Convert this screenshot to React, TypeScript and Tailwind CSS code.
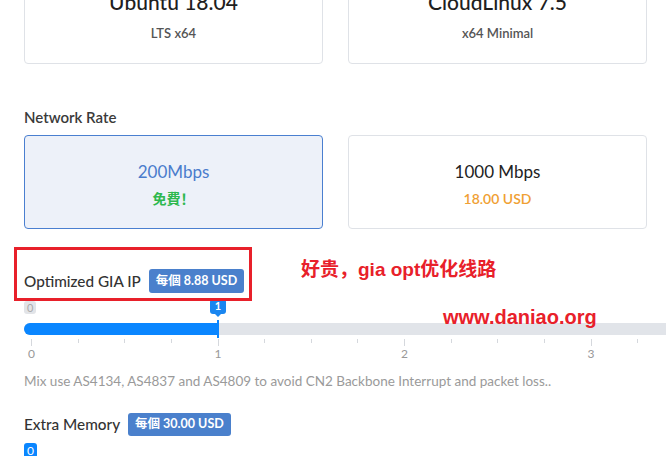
import React from "react"

const font = { fontFamily: '"Lato", "Noto Sans CJK SC", sans-serif' }

function OptionCard({ title, sub, selected, titleClass, subClass, className }: { title: string, sub: string, selected?: boolean, titleClass: string, subClass: string, className?: string }) {
	return (
		<div className={`flex flex-col items-center justify-center rounded-[4px] border ${selected ? "border-[#4a7fd0] bg-[#edf1f9]" : "border-[#dfe2e7] bg-white"} ${className ?? ""}`}>
			<div className={titleClass}>{title}</div>
			<div className={subClass}>{sub}</div>
		</div>
	)
}

function Badge({ children, className }: { children: React.ReactNode, className?: string }) {
	return (
		<span className={`inline-flex items-center rounded-[3px] bg-[#4a80cc] px-[7px] text-[12.5px] font-bold text-white ${className ?? ""}`}>
			{children}
		</span>
	)
}

export default function App() {
	const unit = 186.5
	const ticks = Array.from({ length: 16 }, (_, i) => i)
	return (
		<div className="relative h-[456px] w-[666px] overflow-hidden bg-white" style={font}>
			<div className="-mt-[36px] pl-[24px]">
				{/* OS cards */}
				<div className="grid grid-cols-[299px_299px] gap-[25px]">
					<OptionCard
						title="Ubuntu 18.04"
						sub="LTS x64"
						className="h-[100px] pt-[4px]"
						titleClass="text-[21px] font-medium leading-[28px] text-[#1f1f1f]"
						subClass="mt-[8px] text-[13px] font-semibold text-[#555]"
					/>
					<OptionCard
						title="CloudLinux 7.5"
						sub="x64 Minimal"
						className="h-[100px] pt-[4px]"
						titleClass="text-[21px] font-medium leading-[28px] text-[#1f1f1f]"
						subClass="mt-[8px] text-[13px] font-semibold text-[#555]"
					/>
				</div>

				{/* Network rate */}
				<div className="mt-[43px] text-[15px] font-semibold leading-[20px] text-[#3a3a3a]">Network Rate</div>
				<div className="mt-[8px] grid grid-cols-[299px_299px] gap-[25px]">
					<OptionCard
						selected
						title="200Mbps"
						sub="免費！"
						className="h-[94px] pt-[4px]"
						titleClass="text-[17px] leading-[24px] text-[#4a7ccc]"
						subClass="mt-[4px] text-[14px] font-bold text-[#2eb84f]"
					/>
					<OptionCard
						title="1000 Mbps"
						sub="18.00 USD"
						className="h-[94px] pt-[4px]"
						titleClass="text-[17px] leading-[24px] text-[#222]"
						subClass="mt-[4px] text-[14px] font-semibold text-[#f0a033]"
					/>
				</div>

				{/* Optimized GIA IP */}
				<div className="mt-[40px] flex items-center gap-[8px]">
					<span className="text-[15.3px] font-medium text-[#333]">Optimized GIA IP</span>
					<Badge className="h-[24px]">每個 8.88 USD</Badge>
				</div>

				{/* Slider */}
				<div className="relative mt-[8px] h-[56px] w-[760px]">
					<span className="absolute left-0 top-0 rounded-[3px] bg-[#e2e4e8] px-[3px] text-[11px] leading-[13px] text-[#aaa]">0</span>
					<span className="absolute left-[186px] top-[-2px] flex h-[15px] w-[16px] items-center justify-center rounded-[3px] bg-[#1a86f0] text-[11px] font-bold text-white">1</span>
					<span className="absolute left-[190px] top-[12px] h-0 w-0 border-x-[4px] border-t-[4px] border-x-transparent border-t-[#1a86f0]" />
					<div className="absolute left-0 top-[22px] h-[12px] w-full rounded-l-[6px] bg-[#e1e4e9] bg-[radial-gradient(circle,#d6dae0_0.6px,transparent_0.7px)] bg-[length:6px_6px]" />
					<div className="absolute left-0 top-[22px] h-[12px] w-[194px] rounded-l-[6px] bg-[#0a86ff]" />
					<div className="absolute left-[193px] top-[19px] h-[18px] w-[2px] bg-[#0a86ff]" />
					{ticks.map((i) => {
						const x = 7 + (unit / 4) * i
						const major = i % 4 === 0
						return (
							<React.Fragment key={i}>
								<span
									className={`absolute top-[38px] w-px bg-[#d5d8dd] ${major ? "h-[7px]" : "h-[4px]"}`}
									style={{ left: x }}
								/>
								{major && (
									<span className="absolute top-[44px] w-[20px] -translate-x-1/2 text-center text-[12px] text-[#999]" style={{ left: x + 0.5 }}>
										{i / 4}
									</span>
								)}
							</React.Fragment>
						)
					})}
				</div>

				<p className="mt-[14px] text-[13.5px] text-[#9a9a9a]">Mix use AS4134, AS4837 and AS4809 to avoid CN2 Backbone Interrupt and packet loss..</p>

				{/* Extra memory */}
				<div className="mt-[22px] flex items-center gap-[8px]">
					<span className="text-[15.3px] font-medium text-[#333]">Extra Memory</span>
					<Badge className="h-[23px]">每個 30.00 USD</Badge>
				</div>
				<span className="mt-[7px] inline-block rounded-[3px] bg-[#0a86ff] px-[3px] text-[12px] leading-[15px] text-white">0</span>
			</div>

			{/* screenshot annotations */}
			<div className="absolute left-[14px] top-[247px] h-[54px] w-[238px] border-[3px] border-[#e8202a]" />
			<div className="absolute left-[301px] top-[256px] text-[19px] font-bold text-[#e8202a]" style={{ fontFamily: '"Liberation Sans", "Noto Sans CJK SC", sans-serif' }}>
				好贵，gia opt优化线路
			</div>
			<div className="absolute left-[443px] top-[302px] text-[20px] font-bold text-[#e8202a]" style={{ fontFamily: '"Liberation Sans", sans-serif' }}>
				www.daniao.org
			</div>
		</div>
	)
}
